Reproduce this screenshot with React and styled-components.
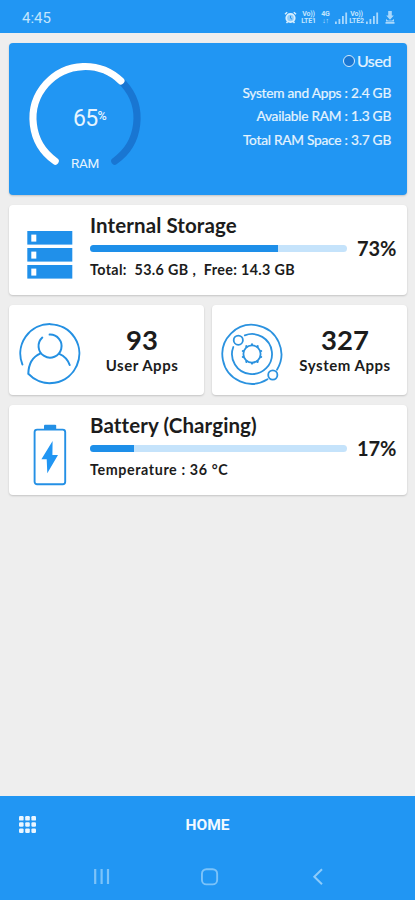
import React from 'react';
import styled, { createGlobalStyle } from 'styled-components';

const GlobalStyle = createGlobalStyle`
  * {
    box-sizing: border-box;
  }

  body {
    margin: 0;
    background: #eeeeee;
    font-family: Lato, sans-serif;
  }

  svg {
    display: block;
    flex-shrink: 0;
  }
`;

const BLUE = '#2196f3';

const Screen = styled.div`
  width: 415px;
  height: 900px;
  display: flex;
  flex-direction: column;
  overflow: hidden;
  background: #eeeeee;
`;

const StatusBar = styled.header`
  height: 33px;
  padding: 2px 20px 0 22px;
  display: flex;
  align-items: center;
  justify-content: space-between;
  background: ${BLUE};
  color: #c3e5fd;
  font-family: Roboto, sans-serif;
  font-size: 15px;
`;

const StatusIcons = styled.div`
  display: flex;
  align-items: center;
`;

const Network = styled.div`
  width: ${({ $width }) => $width}px;
  margin-left: ${({ $gap }) => $gap}px;
  font-size: 7px;
  font-weight: 700;
  line-height: 6.5px;
  letter-spacing: -0.2px;
  text-align: center;
  white-space: nowrap;
`;

const Content = styled.main`
  flex: 1;
  padding: 10px 8px 0 9px;
  display: flex;
  flex-direction: column;
  gap: 10px;
`;

const Card = styled.section`
  height: 90px;
  display: flex;
  border-radius: 4px;
  background: #ffffff;
  color: #1c1c1c;
  box-shadow: 0 1px 2px rgba(0, 0, 0, 0.18);
`;

const RamCard = styled(Card)`
  height: 152px;
  padding: 0 16px;
  justify-content: space-between;
  background: ${BLUE};
  color: #e6f4fe;
`;

const Gauge = styled.div`
  width: 120px;
  height: 120px;
  margin-top: 16px;
  display: grid;

  > * {
    grid-area: 1 / 1;
  }
`;

const GaugeValue = styled.div`
  margin: 48px 0 0 48px;
  display: flex;
  align-items: flex-start;
  font-family: Roboto, sans-serif;
  font-size: 23px;
  line-height: 24px;
  letter-spacing: -0.7px;
`;

const Percent = styled.span`
  font-size: 12.5px;
  font-weight: 500;
  line-height: 17px;
`;

const GaugeLabel = styled.div`
  margin-top: 96px;
  text-align: center;
  font-family: Roboto, sans-serif;
  font-size: 13.5px;
  line-height: 16px;
  letter-spacing: -0.3px;
`;

const RamDetails = styled.div`
  display: flex;
  flex-direction: column;
  align-items: flex-end;
  font-size: 13.7px;
  line-height: 23.5px;
  letter-spacing: -0.24px;
  white-space: nowrap;
  -webkit-text-stroke: 0.2px #e6f4fe;
`;

const Legend = styled.div`
  margin: 6px 0 8px;
  display: flex;
  align-items: center;
  gap: 2px;
  font-size: 16px;
  letter-spacing: -0.4px;
`;

const LegendDot = styled.span`
  width: 12px;
  height: 12px;
  border: 1.5px solid #d3ebfd;
  border-radius: 50%;
  background: #1976d2;
`;

const IconSlot = styled.div`
  width: 81px;
  padding: ${({ $top }) => $top}px 0 0 ${({ $left }) => $left}px;
  flex-shrink: 0;
`;

const Meter = styled.div`
  width: 257px;
  padding-top: 8px;
  white-space: nowrap;
`;

const MeterTitle = styled.div`
  font-size: 20.5px;
  font-weight: 700;
  line-height: 24px;
  letter-spacing: 0.1px;
`;

const Track = styled.div`
  height: 7px;
  margin: 8px 0 9px;
  overflow: hidden;
  border-radius: 4px;
  background: #c5e3fb;
`;

const Fill = styled.div`
  height: 100%;
  background: #1e8fe9;
`;

const MeterNote = styled.div`
  font-size: 14.3px;
  font-weight: 700;
  line-height: 18px;
  letter-spacing: ${({ $spacing }) => $spacing}px;
  white-space: pre;
`;

const MeterValue = styled.div`
  width: 49.5px;
  padding-top: 31px;
  text-align: right;
  font-size: 20px;
  font-weight: 700;
  line-height: 24px;
`;

const Tiles = styled.div`
  display: grid;
  grid-template-columns: 195px 195px;
  gap: 8px;
`;

const TileIcon = styled.div`
  padding: 18px 0 0 ${({ $left }) => $left}px;
`;

const TileText = styled.div`
  width: 96px;
  margin-left: ${({ $left }) => $left}px;
  padding-top: 19px;
  text-align: center;
  white-space: nowrap;
`;

const Count = styled.div`
  font-size: 27.5px;
  font-weight: 700;
  line-height: 32px;
`;

const TileLabel = styled.div`
  font-size: 15px;
  font-weight: 700;
  line-height: 18px;
  letter-spacing: 0.53px;
`;

const BottomBar = styled.footer`
  height: 104px;
  background: ${BLUE};
  color: #f2f9ff;
`;

const TabRow = styled.div`
  height: 57px;
  padding: 0 19px;
  display: grid;
  grid-template-columns: 1fr auto 1fr;
  align-items: center;
  font-family: Roboto, sans-serif;
  font-size: 15.5px;
  font-weight: 700;
`;

const SystemNav = styled.nav`
  height: 47px;
  padding: 15px 90px 0 93px;
  display: flex;
  gap: 91px;
`;

const AlarmIcon = () => (
  <svg width="13" height="13" viewBox="0 0 13 13" fill="none" stroke="#d9effe">
    <circle cx="6.5" cy="7" r="4.2" strokeWidth="1.8" fill="#8fccfa" />
    <path d="M1 3.2 3.2 1.2M12 3.2 9.8 1.2M2.5 12l1.3-1.4M10.5 12l-1.3-1.4" strokeWidth="1.5" />
    <path d="M6.5 4.8V7.2l1.6 1" stroke={BLUE} strokeWidth="1" />
  </svg>
);

const SignalIcon = () => (
  <svg width="13" height="12" viewBox="0 0 13 12" fill="#a9d8fc">
    <path d="M0 9.5h1.8V12H0zM3.5 7h1.8v5H3.5zM7 4h1.8v8H7zM10.3 0.5h1.8V12h-1.8z" />
  </svg>
);

const ChargingIcon = () => (
  <svg width="10" height="13" viewBox="0 0 10 13" fill="#a9d8fc">
    <path d="M3.2 0h3.6v4.6h2L5 8.8 1.2 4.6h2zM1 8l2 1.6h4L9 8v2.4H1zM0.5 11h9v1.8h-9z" />
  </svg>
);

const ARC = 'M30.2 102.1A52 52 0 1 1 89.8 102.1';

const RamArc = ({ percent }) => (
  <svg width="120" height="120" viewBox="0 0 120 120" fill="none" strokeWidth="7.2" strokeLinecap="round">
    <path d={ARC} stroke="#1976d2" />
    <path d={ARC} stroke="#ffffff" pathLength="100" strokeDasharray={`${percent} 200`} />
  </svg>
);

const StorageIcon = () => (
  <svg width="46" height="48" viewBox="0 0 46 48">
    {[0, 17, 34].map(y => (
      <React.Fragment key={y}>
        <rect x="0.3" y={y} width="45" height="13.6" fill="#2090ea" />
        <rect x="4.3" y={y + 3.6} width="5" height="7" fill="#ffffff" />
      </React.Fragment>
    ))}
  </svg>
);

const UserIcon = () => (
  <svg width="62" height="62" viewBox="0 0 62 62" fill="none" stroke="#2490e2" strokeWidth="2" strokeLinecap="round">
    <path d="M3.4 41.5A29.5 29.5 0 1 1 9.3 50.8C9.5 41 13.5 33.8 21.5 30.3" />
    <path d="M23.3 14.6A11.5 11.5 0 1 0 30.6 11.6" />
    <path d="M40.3 30.8C45.5 33 49 37 50.7 42" />
  </svg>
);

const SystemIcon = () => (
  <svg width="62" height="62" viewBox="0 0 62 62" fill="none" stroke="#2b92df" strokeWidth="1.8" strokeLinecap="round">
    <path d="M46.5 56.3A29.5 29.5 0 1 1 56 46.7" />
    <path d="M23.8 12.4A20 20 0 1 1 12.3 24" />
    <circle cx="17.3" cy="17.2" r="4.6" />
    <circle cx="51.8" cy="52" r="4.6" />
    <circle cx="31" cy="31" r="8.6" />
    <g strokeWidth="2.2">
      {[0, 36, 72, 108, 144, 180, 216, 252, 288, 324].map(angle => (
        <path key={angle} d="M31 21.8V21.4" transform={`rotate(${angle} 31 31)`} />
      ))}
    </g>
  </svg>
);

const BatteryIcon = () => (
  <svg width="34" height="62" viewBox="0 0 34 62">
    <rect x="1.6" y="5.6" width="30.6" height="54.6" rx="2.5" fill="none" stroke="#2490e5" strokeWidth="1.9" />
    <rect x="11" y="0.8" width="12.2" height="5" rx="1" fill="#2490e5" />
    <path d="M19.6 17 8.4 35.2h5.3L14.3 49.2 25 31h-5.6z" fill={BLUE} />
  </svg>
);

const GridIcon = () => (
  <svg width="17" height="17" viewBox="0 0 17 17" fill="#eaf6ff">
    {[0, 6.2, 12.4].map(y =>
      [0, 6.2, 12.4].map(x => <rect key={`${x}-${y}`} x={x} y={y} width="4.6" height="4.6" rx="1.2" />)
    )}
  </svg>
);

const RecentsIcon = () => (
  <svg width="17" height="17" viewBox="0 0 17 17" stroke="#7cc3f9" strokeWidth="2.2">
    <path d="M2.2 1v15M8.6 1v15M15 1v15" />
  </svg>
);

const HomeIcon = () => (
  <svg width="18" height="18" viewBox="0 0 18 18" fill="none" stroke="#7cc3f9" strokeWidth="1.9">
    <rect x="0.95" y="1.2" width="15.2" height="15.2" rx="4.5" />
  </svg>
);

const BackIcon = () => (
  <svg width="14" height="18" viewBox="0 0 14 18" fill="none" stroke="#8dcbfa" strokeWidth="2">
    <path d="M12 1.2 4.3 8.7l7.7 7.5" />
  </svg>
);

const MeterCard = ({ icon, iconTop, iconLeft, title, percent, note, noteSpacing }) => (
  <Card>
    <IconSlot $top={iconTop} $left={iconLeft}>
      {icon}
    </IconSlot>
    <Meter>
      <MeterTitle>{title}</MeterTitle>
      <Track>
        <Fill style={{ width: `${percent}%` }} />
      </Track>
      <MeterNote $spacing={noteSpacing}>{note}</MeterNote>
    </Meter>
    <MeterValue>{percent}%</MeterValue>
  </Card>
);

const Tile = ({ icon, iconLeft, textLeft, count, label }) => (
  <Card>
    <TileIcon $left={iconLeft}>{icon}</TileIcon>
    <TileText $left={textLeft}>
      <Count>{count}</Count>
      <TileLabel>{label}</TileLabel>
    </TileText>
  </Card>
);

const App = () => (
  <>
    <GlobalStyle />
    <Screen>
      <StatusBar>
        <span>4:45</span>
        <StatusIcons>
          <AlarmIcon />
          <Network $width={17} $gap={3}>
            Vo))
            <br />
            LTE1
          </Network>
          <Network $width={11} $gap={3}>
            4G
            <br />
            ↓↑
          </Network>
          <Network $width={13} $gap={4}>
            <SignalIcon />
          </Network>
          <Network $width={17} $gap={0}>
            Vo))
            <br />
            LTE2
          </Network>
          <Network $width={13} $gap={1}>
            <SignalIcon />
          </Network>
          <Network $width={10} $gap={6}>
            <ChargingIcon />
          </Network>
        </StatusIcons>
      </StatusBar>
      <Content>
        <RamCard>
          <Gauge>
            <RamArc percent={65} />
            <GaugeValue>
              65<Percent>%</Percent>
            </GaugeValue>
            <GaugeLabel>RAM</GaugeLabel>
          </Gauge>
          <RamDetails>
            <Legend>
              <LegendDot />
              Used
            </Legend>
            <span>System and Apps : 2.4 GB</span>
            <span>Available RAM : 1.3 GB</span>
            <span>Total RAM Space : 3.7 GB</span>
          </RamDetails>
        </RamCard>
        <MeterCard
          icon={<StorageIcon />}
          iconTop={26}
          iconLeft={18}
          title="Internal Storage"
          percent={73}
          note="Total:  53.6 GB ,  Free: 14.3 GB"
          noteSpacing={0.36}
        />
        <Tiles>
          <Tile icon={<UserIcon />} iconLeft={10} textLeft={13} count={93} label="User Apps" />
          <Tile icon={<SystemIcon />} iconLeft={9} textLeft={14} count={327} label="System Apps" />
        </Tiles>
        <MeterCard
          icon={<BatteryIcon />}
          iconTop={19}
          iconLeft={24}
          title="Battery (Charging)"
          percent={17}
          note="Temperature : 36 °C"
          noteSpacing={0.6}
        />
      </Content>
      <BottomBar>
        <TabRow>
          <GridIcon />
          <span>HOME</span>
        </TabRow>
        <SystemNav>
          <RecentsIcon />
          <HomeIcon />
          <BackIcon />
        </SystemNav>
      </BottomBar>
    </Screen>
  </>
);

export default App;
